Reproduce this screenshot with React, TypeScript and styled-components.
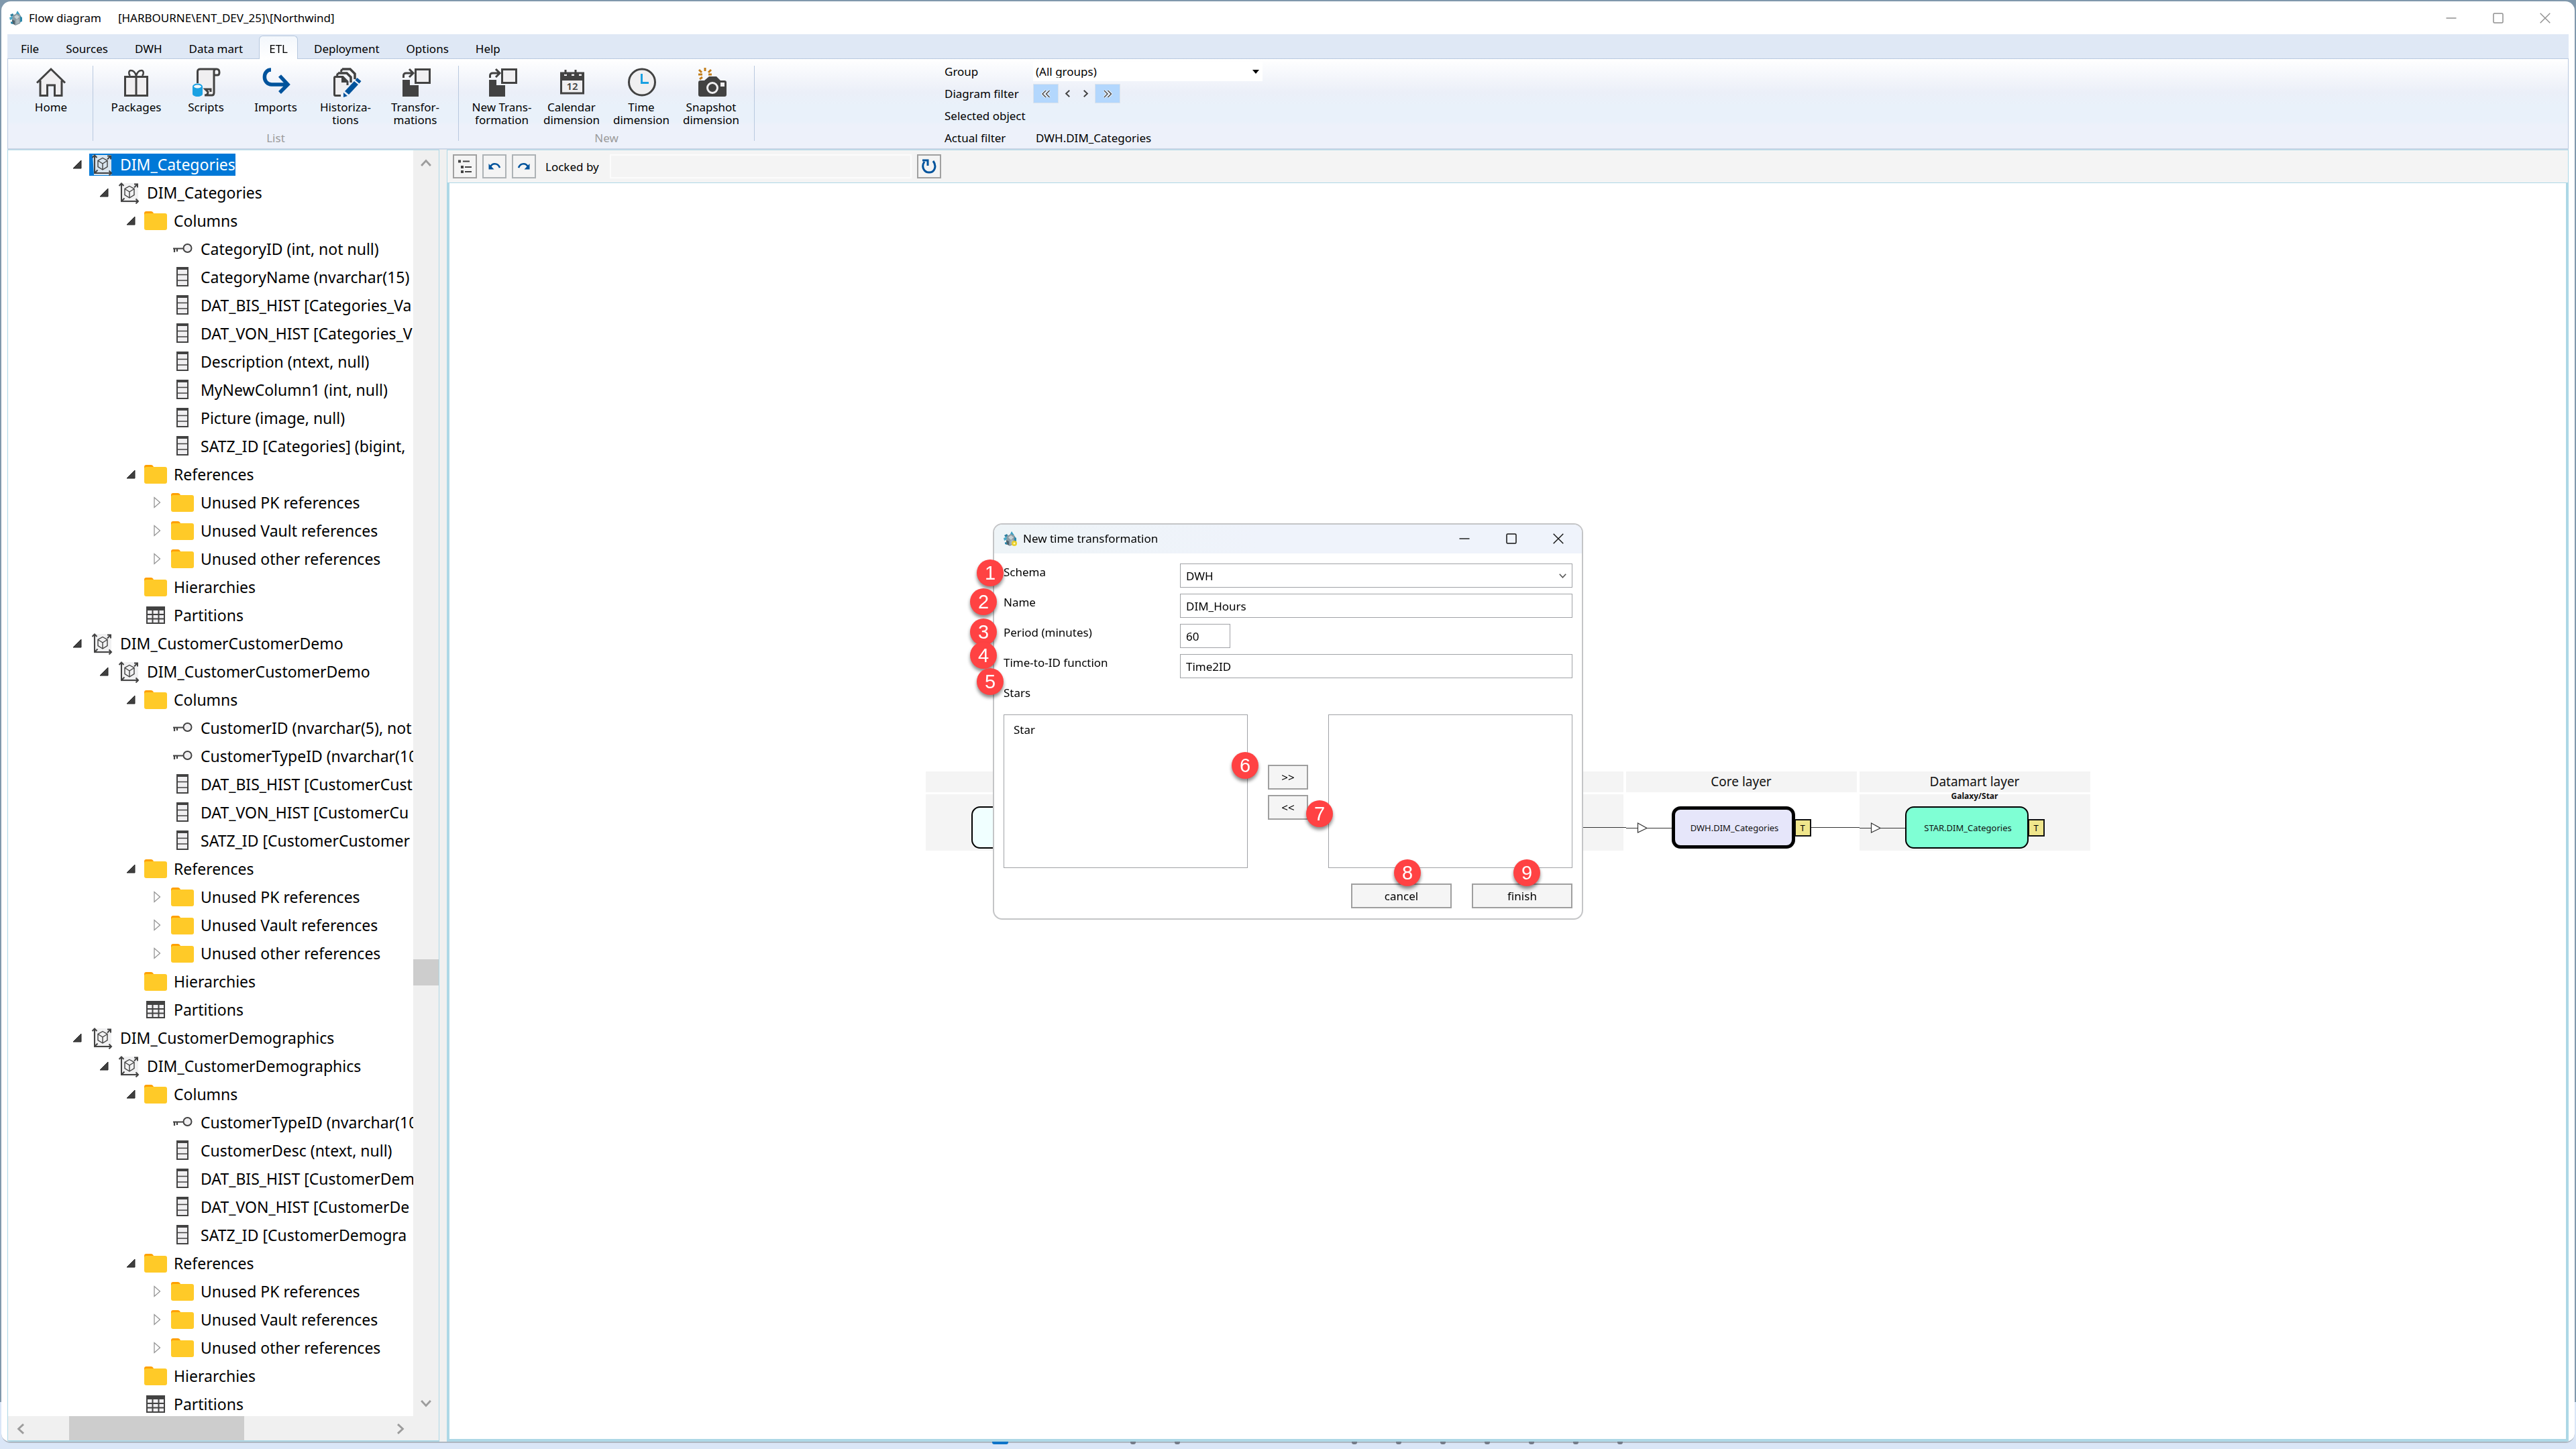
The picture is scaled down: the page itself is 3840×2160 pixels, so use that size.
import React from 'react';
import styled, { createGlobalStyle, css } from 'styled-components';

const GlobalStyle = createGlobalStyle`
  *, *::before, *::after { box-sizing: border-box; }
  html, body, #root { height: 100%; }
  body {
    margin: 0;
    overflow: hidden;
    background: linear-gradient(to top, #dae6f7 0, #dae6f7 70px, #8098ac 70px, #8098ac 100%);
    color: #000;
    font: 17px/19px "Noto Sans", "Open Sans", sans-serif;
  }
  button, input, select { font: inherit; color: inherit; margin: 0; }
  ul { list-style: none; margin: 0; padding: 0; }
`;

/* ---------- window frame ---------- */

const Desktop = styled.div`
  height: 100%;
  min-height: 900px;
  padding: 2px 2px 9px;
`;

const Window = styled.div`
  display: flex;
  flex-direction: column;
  height: 100%;
  padding: 0 9px;
  overflow: hidden;
  background: #fff;
  border-bottom: 2px solid #aeb6c1;
  border-radius: 14px;
`;

const TitleBar = styled.header`
  display: flex;
  flex: none;
  align-items: center;
  height: 49px;
  padding-left: 2px;
`;

const TitleText = styled.span`
  margin-left: 8px;
  white-space: pre;
`;

const TitlePath = styled(TitleText)`
  margin-left: 25px;
`;

const WindowControls = styled.div<{ $tone: string }>`
  display: flex;
  margin-left: auto;
  color: ${(p) => p.$tone};
`;

const ControlButton = styled.button`
  display: grid;
  place-items: center;
  width: 70px;
  height: 38px;
  padding: 0;
  color: inherit;
  background: none;
  border: 0;
`;

/* ---------- ribbon ---------- */

const MenuTabs = styled.nav`
  display: flex;
  flex: none;
  align-items: flex-end;
  height: 37px;
  margin-bottom: -1px;
  background: #dfe8f5;
`;

const MenuTab = styled.button<{ $active?: boolean }>`
  height: 35px;
  margin: 0 4px;
  padding: 3px 15px 0;
  background: none;
  border: 1px solid transparent;
  border-bottom: 0;
  border-radius: 6px 6px 0 0;
  ${(p) =>
    p.$active &&
    css`
      z-index: 1;
      padding: 3px 14px 0;
      background: linear-gradient(#f3f7fc, #fff);
      border-color: #b7c8de;
    `}
`;

const Ribbon = styled.section`
  display: flex;
  flex: none;
  height: 136px;
  padding-left: 2px;
  border: 1px solid #b9c9df;
  border-bottom: 2px solid #cbd6e6;
  background: linear-gradient(#fff 0%, #ebeff8 37%, #e9f1fa 52%, #e9f1fa 70%, #edf1fa 74%, #edf1fa 100%);
`;

const RibbonGroup = styled.div<{ $pad: number }>`
  display: flex;
  flex-direction: column;
  margin: 10px 0 11px;
  padding: 0 ${(p) => p.$pad}px;
  border-right: 1px solid #b9c9df;
`;

const RibbonItems = styled.div`
  display: flex;
`;

const RibbonButton = styled.button`
  display: flex;
  flex-direction: column;
  align-items: center;
  width: 104px;
  height: 98px;
  padding: 0;
  background: none;
  border: 0;
`;

const RibbonLabel = styled.span`
  margin-top: 4px;
  line-height: 19px;
  text-align: center;
  white-space: pre;
`;

const GroupCaption = styled.div`
  color: #9b9b9b;
  line-height: 20px;
  text-align: center;
`;

const FilterGrid = styled.div`
  display: grid;
  grid-template-columns: 132px 342px;
  grid-auto-rows: 33px;
  align-items: center;
  margin: 2px 0 0 283px;
  height: 132px;
`;

const PlainValue = styled.span`
  padding-left: 4px;
`;

const SelectFrame = styled.div`
  position: relative;
  display: flex;
  align-items: center;
`;

const SelectMark = styled.span<{ $right: number }>`
  position: absolute;
  right: ${(p) => p.$right}px;
  display: flex;
  pointer-events: none;
`;

const GroupSelect = styled.select`
  appearance: none;
  width: 100%;
  height: 29px;
  padding: 0 4px;
  background: #fff;
  border: 0;
`;

const FilterButtons = styled.div`
  display: flex;
  align-items: center;
`;

const FilterButton = styled.button<{ $wide?: boolean }>`
  display: grid;
  place-items: center;
  width: ${(p) => (p.$wide ? 38 : 27)}px;
  height: 29px;
  padding: 0;
  background: ${(p) => (p.$wide ? '#b3d7fd' : 'none')};
  border: ${(p) => (p.$wide ? '1px solid #dbe3ec' : '0')};
`;

/* ---------- work area ---------- */

const WorkArea = styled.main`
  display: grid;
  flex: 1;
  grid-template-columns: 644px 1fr;
  column-gap: 11px;
  min-height: 0;
  background: #f0f0f0;
`;

const TreePanel = styled.aside`
  display: grid;
  grid-template: minmax(0, 1fr) 36px / minmax(0, 1fr) 38px;
  min-height: 0;
  background: #f0f0f0;
  border: 1px solid #add8e6;
  border-bottom-width: 2px;
`;

const TreeView = styled.ul`
  min-height: 0;
  overflow: hidden;
  background: #fff;
  font-size: 23px;
  line-height: 33px;
`;

const TreeRow = styled.li<{ $level: number }>`
  display: flex;
  align-items: center;
  height: 42px;
  padding-left: ${(p) => 91 + p.$level * 40}px;
  white-space: nowrap;
`;

const Expander = styled.span`
  display: flex;
  flex: none;
  justify-content: center;
  width: 30px;
  padding-right: 7px;
`;

const TreeItem = styled.span<{ $selected?: boolean }>`
  display: flex;
  align-items: center;
  height: 33px;
  color: ${(p) => (p.$selected ? '#fff' : '#000')};
  background: ${(p) => (p.$selected ? '#0078d7' : 'transparent')};
`;

const TreeIcon = styled.span`
  display: flex;
  flex: none;
  justify-content: center;
  width: 38px;
  margin-right: 8px;
`;

const ScrollBar = styled.div<{ $vertical?: boolean }>`
  display: flex;
  flex-direction: ${(p) => (p.$vertical ? 'column' : 'row')};
  min-height: 0;
`;

const ScrollArrow = styled.button`
  display: grid;
  flex: none;
  place-items: center;
  width: 38px;
  height: 38px;
  padding: 0;
  background: none;
  border: 0;
`;

const ScrollSpace = styled.div<{ $grow: number }>`
  flex: ${(p) => p.$grow} 1 0;
`;

const ScrollThumb = styled.div<{ $length: number }>`
  flex: 0 0 ${(p) => p.$length}px;
  background: #cdcdcd;
`;

const DiagramPanel = styled.section`
  display: flex;
  flex-direction: column;
  min-width: 0;
  min-height: 0;
`;

const Toolbar = styled.div`
  display: flex;
  flex: none;
  align-items: center;
  gap: 8px;
  height: 50px;
  padding: 0 8px;
  background: #f4f4f4;
  border: 1px solid #add8e6;
`;

const ToolButton = styled.button<{ $soft?: boolean }>`
  display: grid;
  place-items: center;
  width: 36px;
  height: 36px;
  padding: 0;
  background: #f4f4f4;
  border: 2px solid ${(p) => (p.$soft ? '#adb2b5' : '#a0a0a0')};
`;

const ToolLabel = styled.label`
  margin: 0 8px 0 6px;
`;

const LockedInput = styled.input`
  width: 450px;
  height: 36px;
  padding: 0 8px;
  background: #f4f4f4;
  border: 2px solid #fcfcfc;
`;

const Canvas = styled.div`
  display: flex;
  flex: 1;
  align-items: center;
  justify-content: center;
  min-height: 0;
  background: #fff;
  border: 4px solid #add8e6;
  border-top: 0;
`;

/* ---------- flow diagram ---------- */

const Layers = styled.div`
  display: flex;
  gap: 4px;
`;

const Layer = styled.div`
  width: 344px;
`;

const LayerHead = styled.div`
  height: 31px;
  margin-bottom: 3px;
  color: #111;
  background: #f4f4f4;
  font-size: 19px;
  line-height: 31px;
  text-align: center;
`;

const LayerBody = styled.div<{ $blank?: boolean }>`
  position: relative;
  display: flex;
  align-items: center;
  height: 84px;
  padding: 18px 0 3px;
  background: ${(p) => (p.$blank ? '#fff' : '#f4f4f4')};
`;

const LayerNote = styled.div`
  position: absolute;
  top: -7px;
  left: 0;
  right: 0;
  color: #111;
  font-size: 12px;
  font-weight: 700;
  line-height: 20px;
  text-align: center;
`;

const LinkIn = styled.svg`
  flex: none;
`;

const LinkOut = styled.span<{ $on?: boolean }>`
  width: 72px;
  height: 1px;
  margin-right: -4px;
  background: ${(p) => (p.$on ? '#333' : 'transparent')};
`;

const FlowNode = styled.div<{ $fill: string; $edge: number }>`
  display: grid;
  place-items: center;
  width: 184px;
  height: 63px;
  padding: 2px 0 0 4px;
  color: #111;
  background: ${(p) => p.$fill};
  border: ${(p) => p.$edge}px solid #000;
  border-radius: 13px;
  font-size: 13px;
`;

const FlowTag = styled.span`
  width: 24px;
  height: 26px;
  background: #f0e68c;
  border: 2px solid #111;
  border-left-width: 1px;
  font-size: 13px;
  line-height: 23px;
  text-align: center;
`;

/* ---------- dialog ---------- */

const Overlay = styled.div`
  position: fixed;
  inset: 0 0 9px;
  display: grid;
  place-items: center;
  pointer-events: none;
`;

const Dialog = styled.section`
  position: relative;
  width: 880px;
  background: #fff;
  border: 2px solid #c4c5c7;
  border-radius: 14px;
  pointer-events: auto;
`;

const DialogTitle = styled.header`
  display: flex;
  align-items: center;
  height: 43px;
  padding: 0 0 2px 13px;
  background: linear-gradient(to right, #eef4f7, #eff3fb 45%);
  border-radius: 12px 12px 0 0;
`;

const DialogBody = styled.div`
  padding: 15px 14px;
`;

const Field = styled.div`
  display: grid;
  grid-template-columns: 263px 1fr;
  height: 45px;
`;

const FieldLabel = styled.label`
  padding-top: 3px;
`;

const fieldBox = css`
  height: 36px;
  padding: 0 8px;
  background: #fff;
  border: 1px solid #a0a2a6;
  border-radius: 0;
  outline: 0;
`;

const TextInput = styled.input<{ $short?: boolean }>`
  ${fieldBox}
  width: ${(p) => (p.$short ? '75px' : '100%')};
`;

const SchemaFrame = styled(SelectFrame)`
  height: 36px;
`;

const SchemaSelect = styled.select`
  ${fieldBox}
  appearance: none;
  width: 100%;
`;

const Transfer = styled.div`
  display: grid;
  grid-template-columns: 364px 1fr 364px;
  height: 229px;
`;

const ListBox = styled.ul`
  padding: 12px 14px;
  border: 1px solid #a0a2a6;
`;

const TransferButtons = styled.div`
  display: flex;
  flex-direction: column;
  align-items: center;
  gap: 8px;
  padding-top: 75px;
`;

const PushButton = styled.button<{ $narrow?: boolean }>`
  width: ${(p) => (p.$narrow ? 60 : 150)}px;
  height: 37px;
  padding: 0;
  background: #f5f5f5;
  border: 2px solid #9f9f9f;
`;

const DialogActions = styled.footer`
  display: flex;
  justify-content: flex-end;
  gap: 30px;
  padding-top: 23px;
`;

const Marker = styled.span<{ $x: number; $y: number }>`
  position: absolute;
  left: ${(p) => p.$x}px;
  top: ${(p) => p.$y}px;
  width: 40px;
  height: 40px;
  color: #fff;
  background: #ff4243;
  border-radius: 50%;
  box-shadow: 0 4px 5px rgba(0, 0, 0, 0.45);
  font: 29px/40px "Liberation Sans", Arial, sans-serif;
  text-align: center;
`;

/* ---------- task bar sliver ---------- */

const TaskStrip = styled.div`
  position: fixed;
  right: 0;
  bottom: 0;
  left: 0;
  display: flex;
  justify-content: center;
  height: 11px;
`;

const TaskSlot = styled.span`
  display: flex;
  justify-content: center;
  width: 66px;
`;

const TaskMark = styled.i<{ $active?: boolean }>`
  width: ${(p) => (p.$active ? 24 : 8)}px;
  height: 4px;
  background: ${(p) => (p.$active ? '#0f74c8' : '#747b88')};
  border-radius: 0 0 3px 3px;
`;

/* ---------- icons ---------- */

const INK = '#424242';
const PAPER = '#f0eff1';
const BLUE = '#00539c';
const SKY = '#1ba1e2';

const AppIcon = ({ accent }: { accent?: boolean }) => (
  <svg width="22" height="24" viewBox="0 0 22 24" aria-hidden="true">
    <path d="M13 1l4 6h-7z" fill="#3aa0c4" />
    <path d="M2 7l4-2 2 3-4 2z" fill="#2f7f9f" />
    <path d="M1 11l6-2v4l-5 2z" fill="#4aa9c9" />
    <path d="M6 8l6-3 6 3 1 5-2 7-7 3-5-4z" fill="#8b9ba3" />
    <path d="M8 10l4-3 4 3-4 4z" fill="#c6d0d4" />
    <path d="M17 9l3 2v6l-3 1z" fill="#2c88aa" />
    <path d="M5 14l4 2v6l-4-2z" fill="#4d626c" />
    <path d="M11 15l4-2 1 6-5 2z" fill="#aab7bd" />
    <path d="M3 17l3 1v3l-3-1z" fill="#2c88aa" />
    {accent && (
      <>
        <circle cx="17" cy="19" r="4" fill="#e9cf2a" />
        <circle cx="17" cy="19" r="1.5" fill="#fff6b0" />
      </>
    )}
  </svg>
);

const Minimize = () => (
  <svg width="16" height="16" viewBox="0 0 16 16" aria-hidden="true">
    <path d="M0.5 8h15" stroke="currentColor" strokeWidth="1.4" />
  </svg>
);
const Maximize = () => (
  <svg width="16" height="16" viewBox="0 0 16 16" aria-hidden="true">
    <rect x="1" y="1" width="14" height="14" rx="1.5" fill="none" stroke="currentColor" strokeWidth="1.5" />
  </svg>
);
const Close = () => (
  <svg width="16" height="16" viewBox="0 0 16 16" aria-hidden="true">
    <path d="M0.7 0.7l14.6 14.6M15.3 0.7L0.7 15.3" stroke="currentColor" strokeWidth="1.4" />
  </svg>
);

const Big = ({ children }: { children: React.ReactNode }) => (
  <svg width="48" height="48" viewBox="0 0 48 48" fill="none" aria-hidden="true">
    {children}
  </svg>
);

const HomeIcon = () => (
  <Big>
    <path d="M8 23L24 7l16 16v21H29V28H19v16H8z" fill={PAPER} />
    <path d="M3 25.500L24 5l21 20.500M8 22v22.500h10.500V29h11v15.500H40V22" stroke={INK} strokeWidth="3" />
  </Big>
);

const PackageIcon = () => (
  <Big>
    <rect x="7.500" y="16.500" width="33" height="28" fill={PAPER} stroke={INK} strokeWidth="3" />
    <path d="M24 16v29" stroke={INK} strokeWidth="3" />
    <path d="M24 15c-2-7-5-8-8-8s-4 5-1 8M24 15c2-7 5-8 8-8s4 5 1 8" stroke={INK} strokeWidth="2.500" />
  </Big>
);

const ScriptIcon = () => (
  <Big>
    <path d="M12 27V9c0-3 1-4 4-4h22v34c0 3-1 5-4 5H20V28z" fill={PAPER} />
    <path d="M11.500 26V9c0-3 1-4 4-4H40c3 0 4 2 4 5s-1 4-3 4h-5M36 14V8c0-2 1-3 3-3M36 14v26c0 3-1 4-3 4H22c4 0 5-2 5-5l-4-4h8v4" stroke={INK} strokeWidth="3" />
    <path d="M4 31v11c0 2 3 4 7.500 4s7.500-2 7.500-4V31z" fill={SKY} />
    <ellipse cx="11.500" cy="31" rx="6.500" ry="3.500" fill="#f4f7fa" stroke={SKY} strokeWidth="2" />
  </Big>
);

const ImportIcon = () => (
  <Big>
    <path d="M17 6C4 6 4 28 18 28h23M30 15l12 13-12 12" stroke={BLUE} strokeWidth="5.500" />
  </Big>
);

const HistoryIcon = () => (
  <Big>
    <path d="M19 5h12l7 7v8M13 11h13l6 6v8" stroke={INK} strokeWidth="3.500" />
    <path d="M19 5l-2 4M13 11l-2 4" stroke={INK} strokeWidth="3" />
    <path d="M17 44.500H9c-1 0-1.500-.5-1.500-1.500V18c0-1 .5-1.500 1.500-1.500h11l7 7V29" fill={PAPER} stroke={INK} strokeWidth="3" />
    <path d="M19 16v8h8" fill={INK} stroke={INK} strokeWidth="2" />
    <path d="M37 23l6 5-14 15-6-5z" fill={BLUE} />
    <path d="M38.500 21.500l3-3.500 6 5-3 3.500zM21 40l6 5-6 2z" fill={BLUE} />
  </Big>
);

const TransformIcon = () => (
  <Big>
    <path d="M5 21h11v8h13v17H5z" fill={INK} />
    <path d="M6.500 18v-3c0-3 1-4 4-4h10M15 5l6 6-6 6" stroke={INK} strokeWidth="3" />
    <rect x="24.500" y="5.500" width="21" height="20" fill={PAPER} stroke={INK} strokeWidth="3" />
  </Big>
);

const CalendarIcon = () => (
  <Big>
    <rect x="8.500" y="11" width="33" height="30" fill={PAPER} stroke={INK} strokeWidth="3" />
    <path d="M7 10h6v5h4v-5h7v5h4v-5h7v5h4v-5h4v12H7z" fill={INK} />
    <path d="M15 6v7M30 6v7" stroke={INK} strokeWidth="3" />
    <text x="25" y="36" textAnchor="middle" fontFamily="Noto Sans, sans-serif" fontSize="15" fontWeight="600" fill={INK}>12</text>
  </Big>
);

const ClockIcon = () => (
  <Big>
    <circle cx="25" cy="24.500" r="19.500" fill={PAPER} stroke={INK} strokeWidth="3" />
    <path d="M24.500 12v13.500H35" stroke={SKY} strokeWidth="3" />
  </Big>
);

const CameraIcon = () => (
  <Big>
    <path d="M15 3v5M6 6l4 4M24 6l-4 4M5 13h6M20 13h5M7 20l4-3" stroke="#c27d1a" strokeWidth="3" />
    <path d="M8 22h6l7-6h11l6 6h6c2 0 3 1 3 3v18c0 2-1 3-3 3H8c-2 0-3-1-3-3V25c0-2 1-3 3-3z" fill={INK} />
    <circle cx="26" cy="33" r="7.500" fill={INK} stroke={PAPER} strokeWidth="3" />
    <rect x="38" y="25" width="6" height="6" fill={PAPER} />
  </Big>
);

const Chevron = ({ turn, size = 14, tone = '#9c9c9c', width = 2.5 }: { turn: number; size?: number; tone?: string; width?: number }) => (
  <svg width={size} height={size} viewBox="0 0 14 14" aria-hidden="true">
    <path d="M1 10.500L7 4l6 6.500" transform={`rotate(${turn} 7 7)`} fill="none" stroke={tone} strokeWidth={width} />
  </svg>
);

const DoubleChevron = ({ flip }: { flip?: boolean }) => (
  <svg width="14" height="14" viewBox="0 0 14 14" aria-hidden="true">
    <path d={flip ? 'M2 2l5 5-5 5M7.500 2l5 5-5 5' : 'M7 2L2 7l5 5M12.500 2l-5 5 5 5'} fill="none" stroke="#f3f6fa" strokeWidth="3.500" />
    <path d={flip ? 'M2 2l5 5-5 5M7.500 2l5 5-5 5' : 'M7 2L2 7l5 5M12.500 2l-5 5 5 5'} fill="none" stroke={INK} strokeWidth="1.400" />
  </svg>
);

const CaretDown = () => (
  <svg width="10" height="6" viewBox="0 0 10 6" aria-hidden="true">
    <path d="M0 0h10L5 6z" fill="#000" />
  </svg>
);

const OpenArrow = () => (
  <svg width="14" height="14" viewBox="0 0 14 14" aria-hidden="true">
    <path d="M13 1v12H1z" fill="#404040" stroke="#262626" />
  </svg>
);
const ClosedArrow = () => (
  <svg width="11" height="18" viewBox="0 0 11 18" aria-hidden="true">
    <path d="M1 1.500v15L9.500 9z" fill="#fff" stroke="#8e8e8e" strokeWidth="1.200" />
  </svg>
);

const CubeIcon = () => (
  <svg width="32" height="33" viewBox="0 0 32 33" fill="none" aria-hidden="true">
    <path d="M2 2h28v30H4z" fill={PAPER} fillOpacity="0.9" />
    <path d="M5 2v27h25M1.500 6L5 2.500 8.500 6M26.500 25.500L30 29l-3.500 3.500" stroke={INK} strokeWidth="2" />
    <path d="M24 3.500h5v5M29 3.500l-5 5M5.500 28.500l4-4" stroke={INK} strokeWidth="2" />
    <path d="M17 6.500l7 4v9l-7 4.500-7-4.500v-9zM10 10.500l7 4.500 7-4.500M17 15v9" stroke={INK} strokeWidth="1.400" />
  </svg>
);

const FolderIcon = () => (
  <svg width="34" height="28" viewBox="0 0 34 28" aria-hidden="true">
    <path d="M0 3c0-2 1-3 3-3h7c2 0 3 1 4 3v5H0z" fill="#ffa000" />
    <path d="M0 6c0-2 1-3 3-3h28c2 0 3 1 3 3v19c0 2-1 3-3 3H3c-2 0-3-1-3-3z" fill="#ffca28" />
  </svg>
);

const KeyIcon = () => (
  <svg width="30" height="16" viewBox="0 0 30 16" fill="none" aria-hidden="true">
    <circle cx="22.500" cy="7" r="6" fill={PAPER} stroke={INK} strokeWidth="2" />
    <path d="M1 7.500h15M3 8v5M7 8v4" stroke={INK} strokeWidth="2.200" />
  </svg>
);

const ColumnIcon = () => (
  <svg width="18" height="30" viewBox="0 0 18 30" fill="none" aria-hidden="true">
    <rect x="1" y="1" width="16" height="27" fill={PAPER} stroke={INK} strokeWidth="2" />
    <path d="M1 2.500h16" stroke={INK} strokeWidth="3" />
    <path d="M1 11.500h16M1 20h16" stroke={INK} strokeWidth="1.500" />
  </svg>
);

const TableIcon = () => (
  <svg width="28" height="26" viewBox="0 0 28 26" fill="none" aria-hidden="true">
    <rect x="1" y="1" width="26" height="24" fill={PAPER} stroke={INK} strokeWidth="2" />
    <path d="M1 3.500h26" stroke={INK} strokeWidth="5" />
    <path d="M1 12h26M1 18.500h26M9.500 5v20M18.500 5v20" stroke={INK} strokeWidth="2" />
  </svg>
);

const OutlineIcon = () => (
  <svg width="22" height="22" viewBox="0 0 22 22" fill="none" aria-hidden="true">
    <path d="M1 1.500h4v4H1zM5 10h4v4H5zM5 17h4v4H5z" fill={INK} />
    <path d="M8 3.500h10M11 12h10M11 19h10" stroke={INK} strokeWidth="1.800" />
  </svg>
);

const UndoIcon = ({ flip }: { flip?: boolean }) => (
  <svg width="18" height="18" viewBox="0 0 18 18" fill="none" aria-hidden="true">
    <g transform={flip ? 'translate(18 0) scale(-1 1)' : undefined}>
      <path d="M3 10c2-6 11-7 14 1" stroke={BLUE} strokeWidth="2.600" />
      <path d="M0.500 5V13.500H8.500z" fill={BLUE} />
    </g>
  </svg>
);

const RefreshIcon = () => (
  <svg width="22" height="24" viewBox="0 0 22 24" fill="none" aria-hidden="true">
    <path d="M4 5c-5 7-1 16 7 16s12-9 6-17" stroke={BLUE} strokeWidth="3" />
    <path d="M1 3h8v8" stroke={BLUE} strokeWidth="3" />
  </svg>
);

/* ---------- data ---------- */

const tabs = ['File', 'Sources', 'DWH', 'Data mart', 'ETL', 'Deployment', 'Options', 'Help'];

type RibbonEntry = [string, React.ComponentType];
const ribbonGroups: { caption: string; pad: number; items: RibbonEntry[] }[] = [
  { caption: '', pad: 10, items: [['Home', HomeIcon]] },
  {
    caption: 'List',
    pad: 12,
    items: [
      ['Packages', PackageIcon],
      ['Scripts', ScriptIcon],
      ['Imports', ImportIcon],
      ['Historiza-\ntions', HistoryIcon],
      ['Transfor-\nmations', TransformIcon],
    ],
  },
  {
    caption: 'New',
    pad: 12,
    items: [
      ['New Trans-\nformation', TransformIcon],
      ['Calendar\ndimension', CalendarIcon],
      ['Time\ndimension', ClockIcon],
      ['Snapshot\ndimension', CameraIcon],
    ],
  },
];

type Kind = 'cube' | 'folder' | 'key' | 'column' | 'table';
const kindIcon: Record<Kind, React.ComponentType> = {
  cube: CubeIcon,
  folder: FolderIcon,
  key: KeyIcon,
  column: ColumnIcon,
  table: TableIcon,
};

type Row = { level: number; kind: Kind; text: string; arrow?: 'open' | 'closed' };

const dimension = (name: string, keys: string[], columns: string[]): Row[] => [
  { level: 0, kind: 'cube', text: name, arrow: 'open' },
  { level: 1, kind: 'cube', text: name, arrow: 'open' },
  { level: 2, kind: 'folder', text: 'Columns', arrow: 'open' },
  ...keys.map((text): Row => ({ level: 3, kind: 'key', text })),
  ...columns.map((text): Row => ({ level: 3, kind: 'column', text })),
  { level: 2, kind: 'folder', text: 'References', arrow: 'open' },
  { level: 3, kind: 'folder', text: 'Unused PK references', arrow: 'closed' },
  { level: 3, kind: 'folder', text: 'Unused Vault references', arrow: 'closed' },
  { level: 3, kind: 'folder', text: 'Unused other references', arrow: 'closed' },
  { level: 2, kind: 'folder', text: 'Hierarchies' },
  { level: 2, kind: 'table', text: 'Partitions' },
];

const rows: Row[] = [
  ...dimension(
    'DIM_Categories',
    ['CategoryID (int, not null)'],
    [
      'CategoryName (nvarchar(15)',
      'DAT_BIS_HIST [Categories_Va',
      'DAT_VON_HIST [Categories_V',
      'Description (ntext, null)',
      'MyNewColumn1 (int, null)',
      'Picture (image, null)',
      'SATZ_ID [Categories] (bigint,',
    ],
  ),
  ...dimension(
    'DIM_CustomerCustomerDemo',
    ['CustomerID (nvarchar(5), not', 'CustomerTypeID (nvarchar(10'],
    [
      'DAT_BIS_HIST [CustomerCust',
      'DAT_VON_HIST [CustomerCu',
      'SATZ_ID [CustomerCustomer',
    ],
  ),
  ...dimension(
    'DIM_CustomerDemographics',
    ['CustomerTypeID (nvarchar(10'],
    [
      'CustomerDesc (ntext, null)',
      'DAT_BIS_HIST [CustomerDem',
      'DAT_VON_HIST [CustomerDe',
      'SATZ_ID [CustomerDemogra',
    ],
  ),
];

const markers: [number, number][] = [
  [-26, 52],
  [-36, 95],
  [-36, 140],
  [-36, 175],
  [-26, 214],
  [354, 339],
  [465, 411],
  [596, 499],
  [774, 499],
];

const taskSlots = ['', 'active', '', '', 'dot', 'dot', '', '', '', 'dot', 'dot', 'dot', 'dot', 'dot', 'dot', 'dot'];

/* ---------- parts ---------- */

const Controls = ({ tone }: { tone: string }) => (
  <WindowControls $tone={tone}>
    <ControlButton aria-label="Minimize"><Minimize /></ControlButton>
    <ControlButton aria-label="Maximize"><Maximize /></ControlButton>
    <ControlButton aria-label="Close"><Close /></ControlButton>
  </WindowControls>
);

const Arrowhead = () => (
  <LinkIn width="68" height="16" viewBox="0 0 68 16" aria-hidden="true">
    <path d="M0 8.500h68" stroke="#333" />
    <path d="M17.500 1v14L31 8.500z" fill="#fff" stroke="#333" strokeWidth="1.200" />
  </LinkIn>
);

const FlowLayer = (p: { title?: string; note?: string; node: string; fill: string; edge: number; blank?: boolean; first?: boolean; last?: boolean }) => (
  <Layer>
    <LayerHead>{p.title}</LayerHead>
    <LayerBody $blank={p.blank}>
      {p.note && <LayerNote>{p.note}</LayerNote>}
      {p.first ? <LinkIn width="68" height="16" /> : <Arrowhead />}
      <FlowNode $fill={p.fill} $edge={p.edge}>{p.node}</FlowNode>
      <FlowTag>{p.node && 'T'}</FlowTag>
      <LinkOut $on={!p.last} />
    </LayerBody>
  </Layer>
);

const TimeDialog = () => (
  <Dialog role="dialog" aria-labelledby="dialog-title">
    <DialogTitle>
      <AppIcon accent />
      <TitleText id="dialog-title">New time transformation</TitleText>
      <Controls tone="#111" />
    </DialogTitle>
    <DialogBody>
      <Field>
        <FieldLabel htmlFor="schema">Schema</FieldLabel>
        <SchemaFrame>
          <SchemaSelect id="schema" defaultValue="DWH"><option>DWH</option></SchemaSelect>
          <SelectMark $right={9}><Chevron turn={180} size={11} tone="#555" width={2} /></SelectMark>
        </SchemaFrame>
      </Field>
      <Field>
        <FieldLabel htmlFor="name">Name</FieldLabel>
        <TextInput id="name" defaultValue="DIM_Hours" />
      </Field>
      <Field>
        <FieldLabel htmlFor="period">Period (minutes)</FieldLabel>
        <TextInput id="period" $short defaultValue="60" />
      </Field>
      <Field>
        <FieldLabel htmlFor="fn">Time-to-ID function</FieldLabel>
        <TextInput id="fn" defaultValue="Time2ID" />
      </Field>
      <Field>
        <FieldLabel as="span" id="stars">Stars</FieldLabel>
      </Field>
      <Transfer>
        <ListBox role="listbox" aria-labelledby="stars"><li role="option">Star</li></ListBox>
        <TransferButtons>
          <PushButton $narrow>&gt;&gt;</PushButton>
          <PushButton $narrow>&lt;&lt;</PushButton>
        </TransferButtons>
        <ListBox role="listbox" aria-labelledby="stars" />
      </Transfer>
      <DialogActions>
        <PushButton>cancel</PushButton>
        <PushButton>finish</PushButton>
      </DialogActions>
    </DialogBody>
    {markers.map(([x, y], i) => (
      <Marker key={i} $x={x} $y={y}>{i + 1}</Marker>
    ))}
  </Dialog>
);

const Tree = () => (
  <TreePanel>
    <TreeView role="tree">
      {rows.map((row, i) => {
        const Icon = kindIcon[row.kind];
        return (
          <TreeRow key={i} $level={row.level} role="treeitem">
            <Expander>
              {row.arrow === 'open' && <OpenArrow />}
              {row.arrow === 'closed' && <ClosedArrow />}
            </Expander>
            <TreeItem $selected={i === 0}>
              <TreeIcon><Icon /></TreeIcon>
              {row.text}
            </TreeItem>
          </TreeRow>
        );
      })}
    </TreeView>
    <ScrollBar $vertical>
      <ScrollArrow aria-label="Scroll up"><Chevron turn={0} size={16} /></ScrollArrow>
      <ScrollSpace $grow={1168} />
      <ScrollThumb $length={39} />
      <ScrollSpace $grow={604} />
      <ScrollArrow aria-label="Scroll down"><Chevron turn={180} size={16} /></ScrollArrow>
    </ScrollBar>
    <ScrollBar>
      <ScrollArrow aria-label="Scroll left"><Chevron turn={-90} size={16} /></ScrollArrow>
      <ScrollSpace $grow={53} />
      <ScrollThumb $length={261} />
      <ScrollSpace $grow={215} />
      <ScrollArrow aria-label="Scroll right"><Chevron turn={90} size={16} /></ScrollArrow>
    </ScrollBar>
  </TreePanel>
);

export default function App() {
  return (
    <>
      <GlobalStyle />
      <Desktop>
        <Window>
          <TitleBar>
            <AppIcon />
            <TitleText>Flow diagram</TitleText>
            <TitlePath>[HARBOURNE\ENT_DEV_25]\[Northwind]</TitlePath>
            <Controls tone="#8f8f8f" />
          </TitleBar>
          <MenuTabs>
            {tabs.map((tab) => (
              <MenuTab key={tab} $active={tab === 'ETL'}>{tab}</MenuTab>
            ))}
          </MenuTabs>
          <Ribbon>
            {ribbonGroups.map((group, i) => (
              <RibbonGroup key={i} $pad={group.pad}>
                <RibbonItems>
                  {group.items.map(([label, Icon]) => (
                    <RibbonButton key={label}>
                      <Icon />
                      <RibbonLabel>{label}</RibbonLabel>
                    </RibbonButton>
                  ))}
                </RibbonItems>
                <GroupCaption>{group.caption}</GroupCaption>
              </RibbonGroup>
            ))}
            <FilterGrid>
              <label htmlFor="group">Group</label>
              <SelectFrame>
                <GroupSelect id="group" defaultValue="(All groups)"><option>(All groups)</option></GroupSelect>
                <SelectMark $right={5}><CaretDown /></SelectMark>
              </SelectFrame>
              <span>Diagram filter</span>
              <FilterButtons>
                <FilterButton $wide aria-label="First"><DoubleChevron /></FilterButton>
                <FilterButton aria-label="Previous"><Chevron turn={-90} size={11} tone={INK} /></FilterButton>
                <FilterButton aria-label="Next"><Chevron turn={90} size={11} tone={INK} /></FilterButton>
                <FilterButton $wide aria-label="Last"><DoubleChevron flip /></FilterButton>
              </FilterButtons>
              <span>Selected object</span>
              <span />
              <span>Actual filter</span>
              <PlainValue>DWH.DIM_Categories</PlainValue>
            </FilterGrid>
          </Ribbon>
          <WorkArea>
            <Tree />
            <DiagramPanel>
              <Toolbar>
                <ToolButton aria-label="Outline"><OutlineIcon /></ToolButton>
                <ToolButton $soft aria-label="Undo"><UndoIcon /></ToolButton>
                <ToolButton $soft aria-label="Redo"><UndoIcon flip /></ToolButton>
                <ToolLabel htmlFor="locked">Locked by</ToolLabel>
                <LockedInput id="locked" readOnly />
                <ToolButton aria-label="Refresh"><RefreshIcon /></ToolButton>
              </Toolbar>
              <Canvas>
                <Layers>
                  <FlowLayer first node="" fill="#f0ffff" edge={2} />
                  <FlowLayer node="" fill="#f0ffff" edge={2} />
                  <FlowLayer node="" fill="#f0ffff" edge={2} />
                  <FlowLayer blank title="Core layer" node="DWH.DIM_Categories" fill="#e6e6fa" edge={5} />
                  <FlowLayer last title="Datamart layer" note="Galaxy/Star" node="STAR.DIM_Categories" fill="#7fffd4" edge={2} />
                </Layers>
              </Canvas>
            </DiagramPanel>
          </WorkArea>
        </Window>
      </Desktop>
      <Overlay>
        <TimeDialog />
      </Overlay>
      <TaskStrip>
        {taskSlots.map((slot, i) => (
          <TaskSlot key={i}>{slot && <TaskMark $active={slot === 'active'} />}</TaskSlot>
        ))}
      </TaskStrip>
    </>
  );
}
